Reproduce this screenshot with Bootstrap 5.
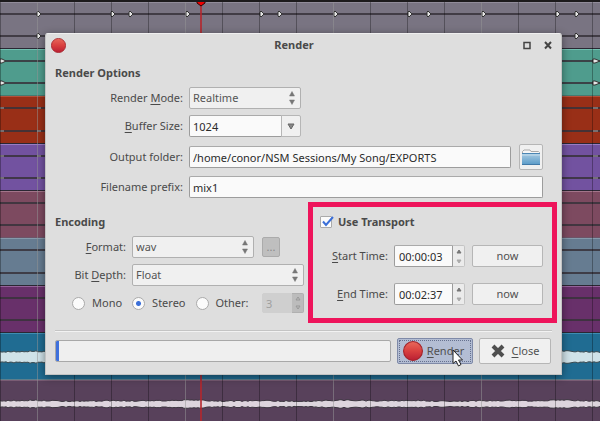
<!DOCTYPE html>
<html lang="en">
<head>
<meta charset="utf-8">
<meta name="viewport" content="width=device-width, initial-scale=1">
<title>Render</title>
<link rel="stylesheet" href="https://cdn.jsdelivr.net/npm/bootstrap@5.3.0/dist/css/bootstrap.min.css">
<style>
  body { font-family: "Noto Sans", "Open Sans", sans-serif; font-size: 11px; line-height: 16px; color: #4a4a4a; min-height: 100vh; background: #58415b; overflow-x: hidden; }

  /* Timeline behind the dialog */
  .timeline { border-top: 2px solid #1c1a1c; }
  .track { height: 47px; border-top: 1px solid; border-bottom: 1px solid #2b2733; overflow: hidden; flex: none; }
  .track svg { display: block; width: 100%; height: 100%; overflow: visible; }
  .track-tall { height: 48px; }
  .track-last { flex: 1 0 auto; border-bottom: 0; }
  .t-grey { background: #797482; border-top-color: #918c9a; }
  .t-teal { background: #4f9c8d; border-top-color: #71c0b0; border-bottom-color: #467a70; }
  .t-rust { background: #992f17; border-top-color: #b5503a; }
  .t-violet { background: #7252a0; border-top-color: #9a7cc4; }
  .t-wine { background: #7d4a60; border-top-color: #a3758a; border-bottom-color: #6c5468; }
  .t-steel { background: #667c91; border-top-color: #8599ab; }
  .t-plum { background: #68306a; border-top-color: #95629a; }
  .t-blue { background: #206c92; border-top-color: #3d8db3; border-bottom-color: #5d7f8c; }
  .t-mauve { background: #58415b; border-top-color: #7a5c74; }
  .silence { stroke: #38333b; stroke-width: 2; opacity: .85; }
  .peak { fill: #e6e6e6; stroke: #333; stroke-width: 1; }
  .grid-lines { background:
    repeating-linear-gradient(90deg, transparent 0 37px, #ffffff4d 37px 38px, transparent 38px 148px),
    repeating-linear-gradient(90deg, #0000004d 0 1px, transparent 1px 37px); }
  .playhead { left: 200px; width: 2px; background: #b5262ccc; }
  .playhead-top { left: 194px; top: 0; }

  /* Dialog */
  .dialog-area { padding: 33px 38px 46px 45px; }
  .dialog { background: #dedede; border: 1px solid #c3c3c3; border-top-color: #efefef; border-radius: 3px 3px 0 0; box-shadow: 0 2px 8px #00000073; padding-bottom: 10px; }
  .titlebar { height: 22px; padding: 0 8px 0 5px; }
  .titlebar h1, .heading { font-size: 11px; line-height: 16px; font-weight: 700; margin: 0; color: #4a4a4a; }
  .win-btn { border: 0; background: none; padding: 0; width: 10px; height: 10px; line-height: 0; }
  .win-gap { gap: 11px; }
  .options { padding: 9px 18px 4px 9px; }
  .option-rows { display: grid; grid-template-columns: 128px 1fr; gap: 6px; align-items: center; margin-top: 6px; }
  .option-rows label, .enc-rows label { text-align: right; }
  .row-folder { margin-top: 1px; }
  u { text-underline-offset: 2px; }

  .ctl { height: 22px; padding: 0 3px; font-size: 11px; line-height: 16px; border: 1px solid #b0b0b0; border-radius: 2px; }
  input.ctl { background: #fafafa; color: #2a2a2a; border-color: #9c9c9c; border-top-color: #aaa; min-width: 0; }
  input.ctl:disabled { background: #cfcfcf; color: #a0a0a0; border-color: #cfcfcf; }
  select.ctl { color: #555; background: #f0f0f0 url("data:image/svg+xml,%3Csvg xmlns='http://www.w3.org/2000/svg' width='6' height='14'%3E%3Cpath d='M0.5 5L3 0.5L5.5 5zM0.5 9L3 13.500L5.500 9z' fill='%23777' stroke='%23777' stroke-width='.5'/%3E%3C/svg%3E") no-repeat right 5px center; background-size: 6px 14px; }
  .w-option { width: 112px; }
  .btn-ctl { --bs-btn-padding-y: 0; --bs-btn-padding-x: 3px; --bs-btn-font-size: 11px; --bs-btn-line-height: 16px; --bs-btn-border-radius: 2px;
    --bs-btn-color: #505050; --bs-btn-bg: #f0f0f0; --bs-btn-border-color: #b6b6b6;
    --bs-btn-hover-color: #5a5a5a; --bs-btn-hover-bg: #f6f6f6; --bs-btn-hover-border-color: #a0a0a0;
    --bs-btn-disabled-color: #8a8a8a; --bs-btn-disabled-bg: #bfbfbf; --bs-btn-disabled-border-color: #ababab; --bs-btn-disabled-opacity: 1; line-height: 16px; }
  .drop-btn { width: 20px; padding: 0; line-height: 0; }
  .folder-btn { width: 24px; height: 26px; padding: 0; line-height: 0; flex: none; }
  .more-btn { width: 18px; height: 20px; padding: 0; }
  .w-now { height: 22px; flex: 1 1 0; }

  .spin { width: 12px; border: 1px solid #c4c4c4; border-left: 0; border-radius: 0 2px 2px 0; background: #ebebeb; }
  .spin button { flex: 1; border: 0; background: none; padding: 0; line-height: 0; color: #888; }
  .spin-off { background: #bcbcbc; border-color: #b0b0b0; }

  .encoding { width: 262px; padding: 12px 4px 0 9px; }
  .enc-rows { display: grid; grid-template-columns: 71px 1fr; gap: 6px; align-items: center; margin-top: 6px; }
  .w-format { width: 122px; }
  .ctl.w-other { width: 30px; height: 20px; }
  .channels { margin-top: 7px; padding-left: 17px; height: 20px; }
  .channels .form-check-input { width: 13px; height: 13px; margin: 0 7px 0 0; border-color: #aaa; background-color: #fbfbfb; box-shadow: none; flex: none; }
  .channels .form-check-input:checked { background-image: radial-gradient(circle, #3b6fd8 0 2px, #3b6fd800 3px); }
  .channels .option-gap { margin-right: 10px; }
  .transport { border: 5px solid #ee145b; margin: 0 4px 0 0; padding: 7px 9px 13px 7px; min-width: 0; }
  .transport .form-check-input { width: 12px; height: 12px; margin: 0 6px 0 0; border: 1px solid #aaa; border-radius: 1px; box-shadow: none; background-color: #fbfbfb; }
  .transport .form-check-input:checked { background-image: none; }
  .tick { left: 2px; top: 2px; pointer-events: none; }
  .time-rows { display: grid; grid-template-columns: 68px 1fr; gap: 16px 6px; align-items: center; margin-top: 15px; }
  .time-rows label { text-align: right; }
  .ctl.w-time { width: 59px; padding-left: 4px; }
  .now-gap { gap: 7px; }

  .rule { margin: 7px 9px 6px; border-top: 1px solid #c4c4c4; border-bottom: 1px solid #f2f2f2; height: 2px; }
  .actions { padding: 0 10px 0 9px; gap: 6px; }
  .progress.render-progress { height: 22px; background: #efefef; border: 1px solid #a8a8a8; border-radius: 2px; }
  .render-progress .progress-bar { background: #3f70dc; }
  .action-btn { height: 26px; width: 76px; flex: none; gap: 4px; padding: 0 3px; }
  .render-btn { --bs-btn-bg: #b3bdd3; --bs-btn-border-color: #7f8aa8; --bs-btn-hover-bg: #b9c3d8; outline: 1px dotted #66718f; outline-offset: -3px; padding-right: 6px; }
  .close-btn { width: 72px; gap: 7px; padding: 0; }
  .pointer { left: 54px; top: 10px; pointer-events: none; }
</style>
<script src="https://cdn.jsdelivr.net/npm/bootstrap@5.3.0/dist/js/bootstrap.bundle.min.js"></script>
</head>
<body class="position-relative">

<div class="timeline position-absolute top-0 start-0 w-100 h-100 d-flex flex-column overflow-hidden" aria-hidden="true">
  <div class="track t-grey"><svg data-peaks="38,112,130,187,261,279,335,409,428,483,557,576" data-lower="38,576"><path d="M0 11H4000M0 33H4000" class="silence"/></svg></div>
  <div class="track t-teal"><svg><path d="M0 11H4000M0 33H4000" class="silence"/><path class="peak" d="M0 9h2l4 2l-4 2h-2zM0 31h2l4 2l-4 2h-2zM593 9h2l5 2l-5 2h-2zM593 31h2l5 2l-5 2h-2z"/></svg></div>
  <div class="track t-rust track-tall"><svg><path d="M0 11H4000M0 34H4000" class="silence"/><path d="M0 11h4M37 11h4M593 11h5M0 34h4M37 34h4M593 34h5" stroke="#aaa"/></svg></div>
  <div class="track t-violet"><svg><path d="M0 11H4000M0 33H4000" class="silence"/><path d="M0 11h4M37 11h4M593 11h5M0 33h4M37 33h4M593 33h5" stroke="#aaa"/></svg></div>
  <div class="track t-wine"><svg><path d="M0 11H4000M0 33H4000" class="silence"/></svg></div>
  <div class="track t-steel track-tall"><svg><path d="M0 11H4000M0 34H4000" class="silence"/></svg></div>
  <div class="track t-plum"><svg><path d="M0 11H4000M0 33H4000" class="silence"/></svg></div>
  <div class="track t-blue"><svg><path data-wave="23,5" fill="#cfe2e8" stroke="#3b4a50"/></svg></div>
  <div class="track track-last t-mauve"><svg><path data-wave="23,3" fill="#ddd5dd" stroke="#3c3640"/></svg></div>
  <div class="grid-lines position-absolute top-0 start-0 w-100 h-100"></div>
  <div class="playhead position-absolute top-0 h-100"></div>
  <svg class="playhead-top position-absolute" width="14" height="6"><path d="M3 -2h8v3l-4 3l-4-3z" fill="#f00000" stroke="#300"/></svg>
</div>

<main class="dialog-area">
  <form class="dialog position-relative" aria-labelledby="dialogTitle" onsubmit="return false">
    <header class="titlebar d-flex align-items-center">
      <svg width="15" height="15" viewBox="0 0 18 18"><circle cx="9" cy="9" r="8.500" fill="url(#ball)" stroke="#a3242b"/></svg>
      <h1 id="dialogTitle" class="flex-grow-1 text-center">Render</h1>
      <div class="d-flex win-gap">
        <button type="button" class="win-btn" aria-label="Maximize"><svg width="10" height="10"><path d="M2 2.500h6v6h-6z" fill="none" stroke="#444" stroke-width="1.500"/></svg></button>
        <button type="button" class="win-btn" aria-label="Close window"><svg width="10" height="10"><path d="M2 2l6 6.500M8 2l-6 6.500" stroke="#444" stroke-width="2"/></svg></button>
      </div>
    </header>

    <section class="options">
      <h2 class="heading">Render Options</h2>
      <div class="option-rows">
        <label for="mode">Render <u>M</u>ode:</label>
        <select id="mode" class="form-select ctl w-option"><option>Realtime</option></select>

        <label for="buffer"><u>B</u>uffer Size:</label>
        <div class="input-group flex-nowrap w-option">
          <input id="buffer" class="form-control ctl" value="1024">
          <button type="button" class="btn btn-ctl drop-btn" aria-label="Buffer sizes"><svg width="8" height="7"><path d="M1 1h6l-3 5z" fill="#888" stroke="#666"/></svg></button>
        </div>

        <label for="folder">Output folder:</label>
        <div class="d-flex align-items-center row-folder">
          <input id="folder" class="form-control ctl me-2" value="/home/conor/NSM Sessions/My Song/EXPORTS">
          <button type="button" class="btn btn-ctl folder-btn" aria-label="Browse">
            <svg width="20" height="18"><path d="M1.500 15V3.500L3 2h6l1 1.500h7.500l1 1V15z" fill="#f6f6f6" stroke="#aaa"/><path d="M1 5.500h18v11H1z" fill="url(#blue)"/><path d="M1 5.500h18" stroke="#4b86b4"/><path d="M1 7h18" stroke="#c3dcec"/><path d="M1 16.500h18" stroke="#427aa8"/></svg>
          </button>
        </div>

        <label for="prefix">Filename prefix:</label>
        <input id="prefix" class="form-control ctl" value="mix1">
      </div>
    </section>

    <div class="d-flex">
      <section class="encoding flex-shrink-0">
        <h2 class="heading">Encoding</h2>
        <div class="enc-rows">
          <label for="format"><u>F</u>ormat:</label>
          <div class="d-flex align-items-center">
            <select id="format" class="form-select ctl w-format me-2"><option>wav</option></select>
            <button type="button" class="btn btn-ctl more-btn" aria-label="Format settings" disabled>...</button>
          </div>
          <label for="depth">Bit <u>D</u>epth:</label>
          <select id="depth" class="form-select ctl"><option>Float</option></select>
        </div>
        <div class="channels d-flex align-items-center">
          <input class="form-check-input" type="radio" name="channels" id="mono"><label class="option-gap" for="mono">Mono</label>
          <input class="form-check-input" type="radio" name="channels" id="stereo" checked><label class="option-gap" for="stereo">Stereo</label>
          <input class="form-check-input" type="radio" name="channels" id="other"><label for="other">Other:</label>
          <div class="d-flex ms-auto">
            <input class="form-control ctl w-other rounded-end-0" aria-label="Other channel count" value="3" disabled>
            <div class="spin spin-off d-flex flex-column">
              <button type="button" aria-label="More channels" disabled><svg width="6" height="5"><path d="M1 4l2-3l2 3z" fill="none" stroke="#999"/></svg></button>
              <button type="button" aria-label="Fewer channels" disabled><svg width="6" height="5"><path d="M1 1l2 3l2-3z" fill="none" stroke="#999"/></svg></button>
            </div>
          </div>
        </div>
      </section>

      <section class="transport flex-grow-1">
        <div class="d-flex align-items-center position-relative">
          <input class="form-check-input" type="checkbox" id="useTransport" checked>
          <svg class="tick position-absolute" width="12" height="11"><path d="M1 5.500l3 3.500l7-8" fill="none" stroke="#3b6fd8" stroke-width="2"/></svg>
          <label class="heading" for="useTransport">Use Transport</label>
        </div>
        <div class="time-rows">
          <label for="start"><u>S</u>tart Time:</label>
          <div class="d-flex now-gap">
            <div class="d-flex">
              <input id="start" class="form-control ctl w-time rounded-end-0" value="00:00:03">
              <div class="spin d-flex flex-column">
                <button type="button" aria-label="Later start"><svg width="6" height="5"><path d="M1 4l2-3l2 3z" fill="#777" stroke="#777"/></svg></button>
                <button type="button" aria-label="Earlier start"><svg width="6" height="5"><path d="M1 1l2 3l2-3z" fill="#aaa" stroke="#aaa"/></svg></button>
              </div>
            </div>
            <button type="button" class="btn btn-ctl w-now">now</button>
          </div>
          <label for="end"><u>E</u>nd Time:</label>
          <div class="d-flex now-gap">
            <div class="d-flex">
              <input id="end" class="form-control ctl w-time rounded-end-0" value="00:02:37">
              <div class="spin d-flex flex-column">
                <button type="button" aria-label="Later end"><svg width="6" height="5"><path d="M1 4l2-3l2 3z" fill="#777" stroke="#777"/></svg></button>
                <button type="button" aria-label="Earlier end"><svg width="6" height="5"><path d="M1 1l2 3l2-3z" fill="#aaa" stroke="#aaa"/></svg></button>
              </div>
            </div>
            <button type="button" class="btn btn-ctl w-now">now</button>
          </div>
        </div>
      </section>
    </div>

    <div class="rule"></div>

    <footer class="actions d-flex align-items-center">
      <div class="progress render-progress flex-grow-1" role="progressbar" aria-label="Render progress" aria-valuenow="1" aria-valuemin="0" aria-valuemax="100">
        <div class="progress-bar" style="width: 1%"></div>
      </div>
      <button type="submit" class="btn btn-ctl action-btn render-btn position-relative d-flex align-items-center justify-content-center">
        <svg width="20" height="20" viewBox="0 0 18 18"><circle cx="9" cy="9" r="8.500" fill="url(#ball)" stroke="#a3242b"/></svg>
        <span><u>R</u>ender</span>
        <svg class="pointer position-absolute" width="12" height="18"><path d="M1 1v13.500l3-2.500l2.500 5l2.500-1.500l-2.500-4.500h4z" fill="#fff" stroke="#222"/></svg>
      </button>
      <button type="button" class="btn btn-ctl action-btn close-btn d-flex align-items-center justify-content-center">
        <svg width="14" height="14"><path d="M2 2l10 10M12 2l-10 10" stroke="#4f4f4f" stroke-width="4"/></svg>
        <span><u>C</u>lose</span>
      </button>
    </footer>
  </form>
</main>

<svg width="0" height="0" class="position-absolute" aria-hidden="true">
  <defs>
    <linearGradient id="ball" x1="0" y1="0" x2="0" y2="1"><stop offset="0" stop-color="#e8695c"/><stop offset=".5" stop-color="#d9403f"/><stop offset="1" stop-color="#b91e33"/></linearGradient>
    <linearGradient id="blue" x1="0" y1="0" x2="0" y2="1"><stop offset="0" stop-color="#a9cbe2"/><stop offset="1" stop-color="#5b9cc9"/></linearGradient>
  </defs>
</svg>

<script>
  // Audio envelopes: a jagged band around the track's centre line
  document.querySelectorAll('[data-wave]').forEach(function (path) {
    var parts = path.dataset.wave.split(',').map(Number), top = [], bottom = [];
    for (var x = 0; x <= 2000; x += 2) {
      var h = parts[1] + 0.3 + Math.sin(x / 17) * Math.sin(x / 41) * 0.6 + Math.sin(x * x) * 0.5;
      top.push(x + ' ' + (parts[0] - h).toFixed(1));
      bottom.unshift(x + ' ' + (parts[0] + h).toFixed(1));
    }
    path.setAttribute('d', 'M' + top.concat(bottom).join('L') + 'z');
  });
  // Short transients on the first track
  document.querySelectorAll('[data-peaks]').forEach(function (svg) {
    [['peaks', 11], ['lower', 33]].forEach(function (row) {
      svg.dataset[row[0]].split(',').forEach(function (x) {
        var p = document.createElementNS('http://www.w3.org/2000/svg', 'path');
        p.setAttribute('class', 'peak');
        p.setAttribute('d', 'M' + x + ' ' + (row[1] - 3) + 'l3 3l-3 3l-1-1v-4z');
        svg.appendChild(p);
      });
    });
  });
</script>
</body>
</html>
